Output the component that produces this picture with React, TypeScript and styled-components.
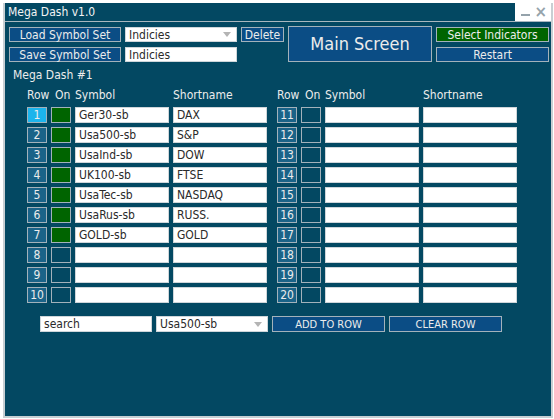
import React from 'react'
import styled, { createGlobalStyle } from 'styled-components'

const colors = {
  body: '#034862',
  button: '#0b4d85',
  rowBtn: '#1a6388',
  rowActive: '#1cb4ec',
  green: '#006400',
  border: '#a3b2bb',
  text: '#ececec',
  input: '#ffffff',
  inputText: '#2a2a2a',
}

const FONT = `'DejaVu Sans Condensed', 'DejaVu Sans', Tahoma, sans-serif`

const GlobalStyle = createGlobalStyle`
  html, body {
    margin: 0;
    padding: 0;
    background: #ffffff;
  }
  * {
    box-sizing: border-box;
  }
`

interface RowData {
  symbol: string
  shortname: string
}

const leftRows: RowData[] = [
  { symbol: 'Ger30-sb', shortname: 'DAX' },
  { symbol: 'Usa500-sb', shortname: 'S&P' },
  { symbol: 'UsaInd-sb', shortname: 'DOW' },
  { symbol: 'UK100-sb', shortname: 'FTSE' },
  { symbol: 'UsaTec-sb', shortname: 'NASDAQ' },
  { symbol: 'UsaRus-sb', shortname: 'RUSS.' },
  { symbol: 'GOLD-sb', shortname: 'GOLD' },
  { symbol: '', shortname: '' },
  { symbol: '', shortname: '' },
  { symbol: '', shortname: '' },
]

const rightRows: RowData[] = Array.from({ length: 10 }, () => ({ symbol: '', shortname: '' }))

const SymbolTable = ({ rows, start }: { rows: RowData[]; start: number }) => (
  <Table>
    <HeadCell>Row</HeadCell>
    <HeadCell offset={4}>On</HeadCell>
    <HeadCell>Symbol</HeadCell>
    <HeadCell>Shortname</HeadCell>
    {rows.map((row, i) => (
      <React.Fragment key={start + i}>
        <RowButton active={start + i === 1}>{start + i}</RowButton>
        <OnCell on={row.symbol !== ''} />
        <Field>{row.symbol}</Field>
        <Field>{row.shortname}</Field>
      </React.Fragment>
    ))}
  </Table>
)

const Arrow = () => (
  <svg width="8" height="5" viewBox="0 0 8 5">
    <path d="M0 0 L8 0 L4 5 Z" fill="#b4b4b4" />
  </svg>
)

const App = () => {
  return (
    <>
      <GlobalStyle />
      <Screen>
        <Frame>
          <TitleRow>
            <TitleBar>Mega Dash v1.0</TitleBar>
            <Controls>
              <Minimize />
              <Close>×</Close>
            </Controls>
          </TitleRow>
          <Body>
            <TopGrid>
              <Button>Load Symbol Set</Button>
              <Select>
                <span>Indicies</span>
                <Arrow />
              </Select>
              <Button>Delete</Button>
              <MainButton>Main Screen</MainButton>
              <Button color={colors.green}>Select Indicators</Button>
              <Button>Save Symbol Set</Button>
              <Input>Indicies</Input>
              <Button col={5}>Restart</Button>
            </TopGrid>
            <SectionLabel>Mega Dash #1</SectionLabel>
            <Tables>
              <SymbolTable rows={leftRows} start={1} />
              <SymbolTable rows={rightRows} start={11} />
            </Tables>
            <BottomBar>
              <Input>search</Input>
              <Select>
                <span>Usa500-sb</span>
                <Arrow />
              </Select>
              <SmallButton>ADD TO ROW</SmallButton>
              <SmallButton>CLEAR ROW</SmallButton>
            </BottomBar>
          </Body>
        </Frame>
      </Screen>
    </>
  )
}

export default App

const Screen = styled.div`
  width: 554px;
  height: 419px;
  padding: 3px 1px 1px 3px;
  background: #ffffff;
  font-family: ${FONT};
  overflow: hidden;
`

const Frame = styled.div`
  display: flex;
  flex-direction: column;
  height: 415px;
  border: 2px solid #c8cfd3;
  border-top: none;
`

const TitleRow = styled.div`
  display: flex;
  height: 19px;
  border-bottom: 1px solid #a9b7bf;
`

const TitleBar = styled.div`
  flex: 1;
  display: flex;
  align-items: center;
  padding-left: 3px;
  background: ${colors.body};
  color: #f4f4f4;
  font-size: 12px;
`

const Controls = styled.div`
  width: 36px;
  display: flex;
  align-items: center;
  justify-content: space-between;
  padding: 0 4px 0 6px;
  background: #ffffff;
`

const Minimize = styled.div`
  width: 9px;
  height: 2px;
  margin-top: 6px;
  background: #95a3ab;
`

const Close = styled.div`
  color: #95a3ab;
  font-size: 15px;
  font-weight: bold;
  line-height: 1;
  font-family: 'DejaVu Sans', sans-serif;
`

const Body = styled.div`
  flex: 1;
  background: ${colors.body};
  padding: 5px 0 0 4px;
`

const TopGrid = styled.div`
  display: grid;
  grid-template-columns: 112px 112px 43px 144px 113px;
  grid-template-rows: 15px 15px;
  column-gap: 4px;
  row-gap: 5px;
`

const Button = styled.div<{ color?: string; col?: number }>`
  display: flex;
  align-items: center;
  justify-content: center;
  grid-column: ${(props) => props.col || 'auto'};
  background: ${(props) => props.color || colors.button};
  border: 1px solid ${colors.border};
  color: ${colors.text};
  font-size: 12px;
  line-height: 1;
  white-space: nowrap;
`

const MainButton = styled(Button)`
  grid-column: 4;
  grid-row: 1 / span 2;
  margin-top: -1px;
  font-size: 18px;
`

const SmallButton = styled(Button)`
  font-size: 11px;
`

const Input = styled.div`
  display: flex;
  align-items: center;
  padding-left: 3px;
  background: ${colors.input};
  border: 1px solid #cfd6da;
  color: ${colors.inputText};
  font-size: 12px;
  line-height: 1;
  white-space: nowrap;
`

const Select = styled(Input)`
  justify-content: space-between;
  padding-right: 5px;
`

const SectionLabel = styled.div`
  margin: 6px 0 0 4px;
  color: ${colors.text};
  font-size: 12px;
  line-height: 14px;
`

const Tables = styled.div`
  display: flex;
  gap: 10px;
  margin: 5px 0 0 18px;
`

const Table = styled.div`
  display: grid;
  grid-template-columns: 20px 20px 94px 94px;
  grid-auto-rows: 16px;
  column-gap: 4px;
  row-gap: 4px;
  width: 240px;
`

const HeadCell = styled.div<{ offset?: number }>`
  padding-left: ${(props) => props.offset || 0}px;
  color: ${colors.text};
  font-size: 12px;
  line-height: 16px;
  white-space: nowrap;
`

const RowButton = styled.div<{ active?: boolean }>`
  display: flex;
  align-items: center;
  justify-content: center;
  background: ${(props) => (props.active ? colors.rowActive : colors.rowBtn)};
  border: 1px solid ${colors.border};
  color: ${colors.text};
  font-size: 12px;
  line-height: 1;
`

const OnCell = styled.div<{ on: boolean }>`
  background: ${(props) => (props.on ? colors.green : colors.body)};
  border: 1px solid ${colors.border};
`

const Field = styled(Input)``

const BottomBar = styled.div`
  display: grid;
  grid-template-columns: 112px 112px 113px 113px;
  grid-template-rows: 16px;
  column-gap: 4px;
  margin: 13px 0 0 31px;
`
